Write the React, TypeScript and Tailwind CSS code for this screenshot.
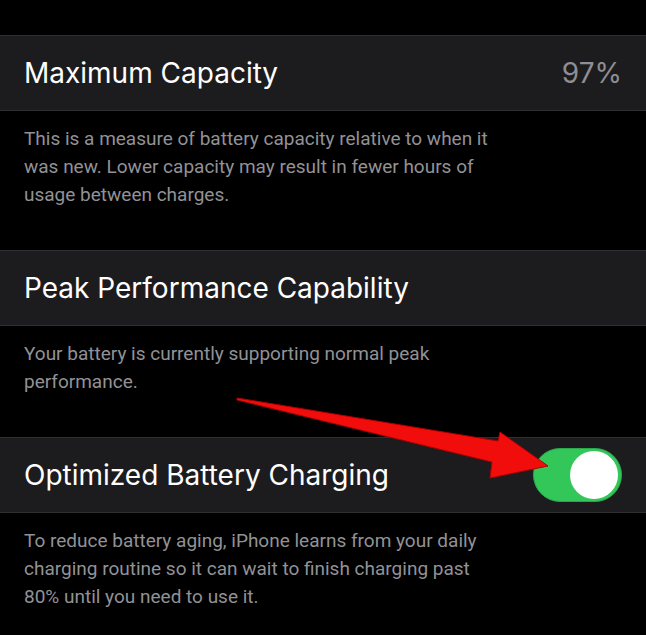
const font = { fontFamily: "Inter, 'Noto Sans', sans-serif" };
const noteFont = { fontFamily: "Roboto, 'Noto Sans', sans-serif" };

function Row({ children }: { children: React.ReactNode }) {
  return (
    <div className="flex h-[76px] items-center justify-between border-y border-[#2f2f31] bg-[#1c1c1e] pl-6 pr-6">
      {children}
    </div>
  );
}

function Note({ children }: { children: React.ReactNode }) {
  return (
    <p
      className="w-[500px] pb-[41px] pl-6 pt-[14px] text-[19px] leading-[28px] text-[#929296]"
      style={noteFont}
    >
      {children}
    </p>
  );
}

function Toggle() {
  return (
    <div className="flex h-[54px] w-[89px] items-center justify-end rounded-full border border-[#2aa84c] bg-[#33c659] pr-[3px]">
      <div className="h-[48px] w-[48px] rounded-full bg-white" />
    </div>
  );
}

function Arrow() {
  return (
    <svg
      className="pointer-events-none absolute left-0 top-0"
      width="646"
      height="635"
      viewBox="0 0 646 635"
    >
      <polygon
        points="237,398 498,441 500,432 548,466 490,478 492,462 237,400"
        fill="#f20d0d"
        stroke="#b00000"
        strokeWidth="1"
        strokeLinejoin="round"
      />
    </svg>
  );
}

export default function App() {
  return (
    <div className="relative h-[635px] w-[646px] overflow-hidden bg-black" style={font}>
      <div className="h-[35px]" />
      <Row>
        <span className="text-[28px] text-white">Maximum Capacity</span>
        <span className="text-[28px] text-[#8e8e93]">97%</span>
      </Row>
      <Note>
        This is a measure of battery capacity relative to when it was new. Lower capacity may
        result in fewer hours of usage between charges.
      </Note>
      <Row>
        <span className="text-[28px] text-white">Peak Performance Capability</span>
      </Row>
      <Note>Your battery is currently supporting normal peak performance.</Note>
      <Row>
        <span className="text-[28px] text-white">Optimized Battery Charging</span>
        <Toggle />
      </Row>
      <Note>
        To reduce battery aging, iPhone learns from your daily charging routine so it can wait
        to finish charging past 80% until you need to use it.
      </Note>
      <Arrow />
    </div>
  );
}
